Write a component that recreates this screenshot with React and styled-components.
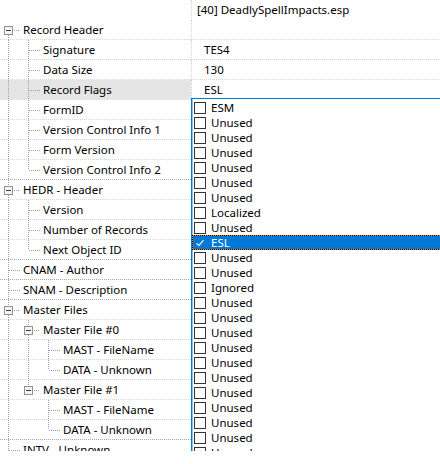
import styled, { createGlobalStyle, css } from "styled-components";

const GlobalStyle = createGlobalStyle`
  html, body {
    margin: 0;
    padding: 0;
    background: #fff;
  }
  body {
    font-family: "Noto Sans", "Liberation Sans", sans-serif;
    font-size: 11.5px;
    color: #000;
  }
`;

const tree = [
  {
    label: "Record Header",
    children: [
      { label: "Signature", value: "TES4" },
      { label: "Data Size", value: "130" },
      { label: "Record Flags", value: "ESL", hot: true },
      { label: "FormID" },
      { label: "Version Control Info 1" },
      { label: "Form Version" },
      { label: "Version Control Info 2" },
    ],
  },
  {
    label: "HEDR - Header",
    children: [
      { label: "Version" },
      { label: "Number of Records" },
      { label: "Next Object ID" },
    ],
  },
  { label: "CNAM - Author" },
  { label: "SNAM - Description" },
  {
    label: "Master Files",
    children: [
      {
        label: "Master File #0",
        children: [{ label: "MAST - FileName" }, { label: "DATA - Unknown" }],
      },
      {
        label: "Master File #1",
        children: [{ label: "MAST - FileName" }, { label: "DATA - Unknown" }],
      },
    ],
  },
  { label: "INTV - Unknown" },
];

const flags = [
  "ESM", "Unused", "Unused", "Unused", "Unused", "Unused", "Unused",
  "Localized", "Unused", "ESL", "Unused", "Unused", "Ignored",
  "Unused", "Unused", "Unused", "Unused", "Unused", "Unused",
  "Unused", "Unused", "Unused", "Unused", "Unused",
];

// flatten the tree into rows, keeping track of which ancestor rails continue
function flatten(nodes, depth, rails, out) {
  nodes.forEach((node, i) => {
    // the root list keeps going below the visible area
    const last = depth > 0 && i === nodes.length - 1;
    const firstRoot = depth === 0 && i === 0;
    out.push({ ...node, depth, rails, last, firstRoot, kids: !!node.children });
    if (node.children) flatten(node.children, depth + 1, [...rails, !last], out);
  });
  return out;
}

const rows = flatten(tree, 0, [], []);

const LINE = "#a0a0a0";

function Rail() {
  return (
    <GuideSvg width="20" height="20" viewBox="0 0 20 20">
      <line x1="8.5" y1="0" x2="8.5" y2="20" stroke={LINE} strokeDasharray="1 1" />
    </GuideSvg>
  );
}

function Connector({ last, firstRoot, kids }) {
  return (
    <GuideSvg width="20" height="20" viewBox="0 0 20 20">
      {!firstRoot && (
        <line x1="8.5" y1="0" x2="8.5" y2={kids ? 6 : 10} stroke={LINE} strokeDasharray="1 1" />
      )}
      {!last && (
        <line x1="8.5" y1={kids ? 15 : 10} x2="8.5" y2="20" stroke={LINE} strokeDasharray="1 1" />
      )}
      <line x1={kids ? 14 : 9} y1="10.5" x2="21" y2="10.5" stroke={LINE} strokeDasharray="1 1" />
      {kids && (
        <>
          <rect x="4.5" y="6.5" width="8" height="8" fill="#f4f4f4" stroke="#919191" />
          <line x1="6" y1="10.5" x2="11" y2="10.5" stroke="#3c3c3c" />
        </>
      )}
    </GuideSvg>
  );
}

function TreeRow({ row, next }) {
  return (
    <Row $strong={!next || next.depth === 0}>
      <NameCell $hot={row.hot}>
        {row.rails.map((on, i) => (on ? <Rail key={i} /> : <Blank key={i} />))}
        <Connector last={row.last} firstRoot={row.firstRoot} kids={row.kids} />
        <Label>{row.label}</Label>
      </NameCell>
      <ValueCell $pad={12}>{row.value}</ValueCell>
    </Row>
  );
}

export default function App() {
  return (
    <>
      <GlobalStyle />
      <View>
        <Row $plain>
          <NameCell />
          <ValueCell $pad={5}>[40] DeadlySpellImpacts.esp</ValueCell>
        </Row>
        {rows.map((row, i) => (
          <TreeRow key={i} row={row} next={rows[i + 1]} />
        ))}
        <FlagList>
          {flags.map((f, i) => {
            const on = f === "ESL";
            return (
              <FlagItem key={i} $selected={on}>
                <Box $checked={on}>
                  {on && (
                    <svg width="10" height="10" viewBox="0 0 10 10">
                      <path d="M1.5 5.2 L3.8 7.5 L8.6 2.2" fill="none" stroke="#d3e6f8" strokeWidth="1.3" />
                    </svg>
                  )}
                </Box>
                <FlagText>{f}</FlagText>
              </FlagItem>
            );
          })}
        </FlagList>
      </View>
    </>
  );
}

const View = styled.div`
  position: relative;
  width: 440px;
  height: 451px;
  overflow: hidden;
  background: #fff;
`;

const Row = styled.div`
  display: flex;
  height: 20px;
  ${(p) =>
    !p.$plain &&
    css`
      background: repeating-linear-gradient(
          to right,
          ${p.$strong ? "#a8a8a8" : "#d6d6d6"} 0 1px,
          transparent 1px 2px
        )
        left bottom / 100% 1px no-repeat;
    `}
`;

const NameCell = styled.div`
  width: 191px;
  flex: none;
  display: flex;
  align-items: center;
  white-space: nowrap;
  overflow: hidden;
  ${(p) =>
    p.$hot &&
    css`
      background: linear-gradient(#e5e5e5, #e5e5e5) left top / 100% 19px no-repeat;
    `}
`;

const GuideSvg = styled.svg`
  flex: none;
  display: block;
`;

const Blank = styled.span`
  flex: none;
  width: 20px;
  height: 20px;
`;

const Label = styled.span`
  margin-left: 3px;
  line-height: 19px;
  padding-bottom: 1px;
`;

const ValueCell = styled.div`
  flex: 1;
  display: flex;
  align-items: center;
  padding-left: ${(p) => p.$pad}px;
  padding-bottom: 1px;
  border-left: 1px dotted #d4d4d4;
  white-space: nowrap;
`;

const FlagList = styled.div`
  position: absolute;
  top: 98px;
  left: 191px;
  width: 320px;
  height: 400px;
  background: #fff;
  border-top: 1px solid #0078d7;
  border-left: 1px solid #0078d7;
  box-shadow: inset 1px 0 0 #8cc2ef;
  padding: 1px 0 0 1px;
`;

const FlagItem = styled.div`
  display: flex;
  align-items: center;
  height: 15px;
  box-sizing: border-box;
  color: #000;
  ${(p) =>
    p.$selected &&
    css`
      color: #fff;
      border: 1px dotted #000;
      background: linear-gradient(#0078d7, #0078d7) padding-box,
        linear-gradient(#ff8728, #ff8728) border-box;
      margin-left: -1px;
      padding-left: 0;
    `}
`;

const Box = styled.span`
  flex: none;
  width: 12px;
  height: 12px;
  box-sizing: border-box;
  margin-left: 1px;
  border: 1px solid ${(p) => (p.$checked ? "#0078d7" : "#333")};
  display: flex;
  align-items: center;
  justify-content: center;
`;

const FlagText = styled.span`
  margin-left: 5px;
  line-height: 15px;
`;
